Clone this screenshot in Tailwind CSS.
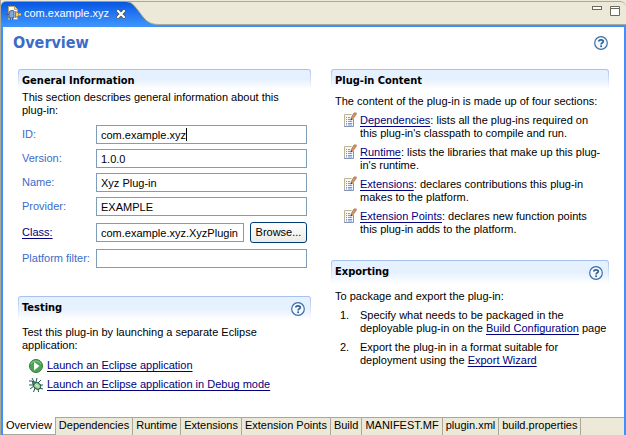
<!DOCTYPE html>
<html lang="en">
<head>
<meta charset="utf-8">
<title>com.example.xyz</title>
<script src="https://cdn.jsdelivr.net/npm/@tailwindcss/browser@4"></script>
</head>
<body class="bg-white text-black text-[11px] leading-[13px] font-['Tahoma','Liberation_Sans',sans-serif]">
<svg class="hidden" aria-hidden="true">
  <symbol id="help" viewBox="0 0 14 14">
    <circle cx="7" cy="7" r="6.3" fill="#f4f9ff" stroke="#3c6ea3" stroke-width="1.2"/>
    <path d="M4.8 5.6C4.8 3.2 9.3 3.2 9.3 5.5C9.3 6.9 7.1 6.7 7.1 8.6" fill="none" stroke="#2d6298" stroke-width="1.7"/>
    <rect x="6.2" y="9.4" width="1.8" height="1.7" fill="#2d6298"/>
  </symbol>
  <symbol id="page" viewBox="0 0 14 15">
    <path d="M1.5 14.5V2.5H8M10.5 6V14.5" fill="#f3f7ff"/>
    <rect x="1" y="2" width="10" height="13" fill="#f3f7ff"/>
    <path d="M1.5 14V2.5H8.5" fill="none" stroke="#c2b48c"/>
    <path d="M10.5 7V14.5H1" fill="none" stroke="#8294ba"/>
    <path d="M3 5.5H4M5 5.5H7M3 7.5H4M5 7.5H7M3 9.5H4M5 9.5H9M3 11.5H4M5 11.5H9M3 13H4M5 13H9" stroke="#7f9bcb"/>
    <path d="M7.8 8L8.4 5.3L11 .8L13.5 1L13 3L10 6.8Z" fill="#d3935a" stroke="#94613b" stroke-width=".5"/>
    <path d="M7.3 8.6L8.1 6.3L9.5 7.3Z" fill="#333"/>
  </symbol>
</svg>
<div class="flex flex-col min-h-screen border-l border-[#aca899]">
  <header class="flex h-[25px] bg-[#ece9d8]">
    <div class="flex items-center mt-px h-6 pl-[5px] rounded-tl-[5px] border-t border-[#8f9cae] bg-linear-to-b from-[#0855e2] to-[#3b92fc] text-white">
      <svg class="w-[15px] h-[15px] shrink-0" viewBox="0 0 15 15">
        <path d="M2.5 .5H8.5L11.5 3.5V13.5H2.5Z" fill="#fffdf0" stroke="#b9a56d"/>
        <path d="M8.5 .5V3.5H11.5" fill="#f2d99a" stroke="#b9a56d"/>
        <path d="M0 8.5H3M3 12V7C3 4.5 6 4 8 5V12Z" fill="#83a8dc" stroke="#345e9e"/>
        <path d="M4.5 12V14M6.5 12V14" stroke="#345e9e"/>
        <path d="M9.5 5.5L12.5 7V10L9.5 11.5Z" fill="#f6cf62" stroke="#a87921"/>
        <path d="M12.5 8.5H15" stroke="#f6cf62" stroke-width="2"/>
      </svg>
      <span class="ml-[3px]">com.example.xyz</span>
      <button aria-label="Close" class="ml-[7px] shrink-0"><svg class="w-[10px] h-[10px]" viewBox="0 0 10 10"><path d="M1 1L9 9M9 1L1 9" stroke="#4a4a42" stroke-width="3.6"/><path d="M1.3 1.3L8.7 8.7M8.7 1.3L1.3 8.7" stroke="#fff" stroke-width="2.2"/></svg></button>
    </div>
    <svg class="w-[32px] h-[25px] shrink-0" viewBox="0 0 32 25">
      <defs><linearGradient id="tab" gradientUnits="userSpaceOnUse" x1="0" y1="1" x2="0" y2="25"><stop stop-color="#0855e2"/><stop offset="1" stop-color="#3b92fc"/></linearGradient></defs>
      <path d="M0 1.5C5 2 7 4 11 9C17 16 20 24.5 32 24.5V25H0Z" fill="url(#tab)"/>
      <path d="M0 1.5C5 2 7 4 11 9C17 16 20 24.5 32 24.5" fill="none" stroke="#aca899"/>
      <path d="M0 1.5H32" stroke="#aca899"/>
    </svg>
    <div class="flex flex-1 justify-end gap-2 mt-px border-t border-b border-[#aca899] rounded-tr-[6px] pr-[6px] pt-1">
      <button aria-label="Minimize" class="flex items-start"><svg class="w-[10px] h-[10px]" viewBox="0 0 10 10"><rect x=".5" y=".5" width="9" height="3" fill="#fff" stroke="#6b6a5c"/></svg></button>
      <button aria-label="Maximize" class="flex items-start"><svg class="w-[10px] h-[10px]" viewBox="0 0 10 10"><path d="M.5 .5H9.5V9.5H.5ZM0 2.5H10" fill="#fff" stroke="#6b6a5c"/></svg></button>
    </div>
  </header>
  <div class="flex flex-col flex-1 border-2 border-b-0 border-[#3b92fc]">
    <main class="flex-1 px-[15px]">
      <div class="flex items-center justify-between h-8 -ml-[5px] pr-px">
        <h1 class="text-[16px] leading-5 font-bold font-['DejaVu_Sans_Condensed',sans-serif] text-[#3a6cc8]">Overview</h1>
        <button aria-label="Help"><svg class="w-[14px] h-[14px]"><use href="#help"/></svg></button>
      </div>
      <div class="grid grid-cols-[minmax(0,293fr)_minmax(0,278fr)] gap-5 pt-[10px]">
        <div class="flex flex-col gap-7">
          <section>
            <div class="h-5 rounded-t-[3px] bg-linear-to-b from-[#a6c0ee] to-white p-px pb-0"><h2 class="h-full rounded-t-[2px] px-[3px] pt-1 font-bold font-['DejaVu_Sans_Condensed',sans-serif] bg-linear-to-b from-[#e6f1ff] from-50% to-white">General Information</h2></div>
            <p class="px-1 pt-[2px]">This section describes general information about this<br>plug-in:</p>
            <form class="grid grid-cols-[70px_minmax(0,1fr)] items-center gap-x-1 gap-y-[5px] pl-1 pr-[4px] pt-2 text-[#3a6cc8]">
              <label for="id">ID:</label>
              <div class="relative flex"><input id="id" value="com.example.xyz" class="h-[19px] w-full min-w-0 border border-[#7f9db9] px-1 text-black"><span class="absolute left-[90px] top-[3px] h-[13px] w-px bg-black"></span></div>
              <label for="version">Version:</label>
              <input id="version" value="1.0.0" class="h-[19px] w-full min-w-0 border border-[#7f9db9] px-1 text-black">
              <label for="name">Name:</label>
              <input id="name" value="Xyz Plug-in" class="h-[19px] w-full min-w-0 border border-[#7f9db9] px-1 text-black">
              <label for="provider">Provider:</label>
              <input id="provider" value="EXAMPLE" class="h-[19px] w-full min-w-0 border border-[#7f9db9] px-1 text-black">
              <label for="class"><a href="#" class="text-[#000080] underline underline-offset-2">Class:</a></label>
              <div class="flex items-center gap-[6px] h-[23px]">
                <input id="class" value="com.example.xyz.XyzPlugin" class="h-[19px] flex-1 min-w-0 border border-[#7f9db9] px-1 text-black">
                <button type="button" class="h-[21px] w-[57px] rounded-[3px] border border-[#003c74] bg-linear-to-b from-white to-[#ecebe6] text-black">Browse...</button>
              </div>
              <label for="filter" class="whitespace-nowrap">Platform filter:</label>
              <input id="filter" class="h-[19px] w-full min-w-0 border border-[#7f9db9] px-1 text-black">
            </form>
          </section>
          <section>
            <div class="h-6 rounded-t-[3px] bg-linear-to-b from-[#a6c0ee] to-white p-px pb-0"><div class="flex h-full justify-between rounded-t-[2px] pl-[3px] pr-[5px] pt-1 bg-linear-to-b from-[#e6f1ff] from-50% to-white"><h2 class="font-bold font-['DejaVu_Sans_Condensed',sans-serif]">Testing</h2><button aria-label="Testing help" class="self-start pt-px"><svg class="w-[14px] h-[14px]"><use href="#help"/></svg></button></div></div>
            <p class="px-1 pt-[6px]">Test this plug-in by launching a separate Eclipse<br>application:</p>
            <ul class="pl-[11px] pt-1 text-[#000080]">
              <li class="flex items-center gap-1 h-[19px]"><svg class="w-[14px] h-[14px]" viewBox="0 0 14 14"><circle cx="7" cy="7" r="6.5" fill="#4da454" stroke="#2f7c3d"/><path d="M2 5C3 1 10 1 12 5" fill="none" stroke="#8bc98b"/><path d="M5 3L10.5 7L5 11.5Z" fill="#fff"/></svg><a href="#" class="underline underline-offset-2">Launch an Eclipse application</a></li>
              <li class="flex items-center gap-1 h-[19px]"><svg class="w-[14px] h-[14px]" viewBox="0 0 14 14"><path d="M3 0L5 4M8 0L7 4M0 3H3L5 5M0 7H4M1 11L5 8M4.5 14L6 10M9.5 14L9 10M14 11L10 10M14 7H10M12 2L9 5" fill="none" stroke="#24564e"/><ellipse cx="8" cy="7.8" rx="3.9" ry="3" transform="rotate(35 8 7.8)" fill="#a9d59a" stroke="#24564e"/><circle cx="4.9" cy="5" r="1.5" fill="#4c8a72" stroke="#24564e" stroke-width=".7"/><path d="M6.5 6.5L9.5 8.7" stroke="#e4f6d5"/></svg><a href="#" class="underline underline-offset-2">Launch an Eclipse application in Debug mode</a></li>
            </ul>
          </section>
        </div>
        <div class="flex flex-col gap-6">
          <section>
            <div class="h-5 rounded-t-[3px] bg-linear-to-b from-[#a6c0ee] to-white p-px pb-0"><h2 class="h-full rounded-t-[2px] px-[3px] pt-1 font-bold font-['DejaVu_Sans_Condensed',sans-serif] bg-linear-to-b from-[#e6f1ff] from-50% to-white">Plug-in Content</h2></div>
            <p class="pl-1 pt-[6px] whitespace-nowrap">The content of the plug-in is made up of four sections:</p>
            <ul class="flex flex-col gap-[6px] pl-3 pt-[6px] whitespace-nowrap">
              <li class="flex gap-[3px]"><svg class="w-[14px] h-[15px] -mt-[2px] shrink-0"><use href="#page"/></svg><p><a href="#" class="text-[#000080] underline underline-offset-2">Dependencies</a>: lists all the plug-ins required on<br>this plug-in's classpath to compile and run.</p></li>
              <li class="flex gap-[3px]"><svg class="w-[14px] h-[15px] -mt-[2px] shrink-0"><use href="#page"/></svg><p><a href="#" class="text-[#000080] underline underline-offset-2">Runtime</a>: lists the libraries that make up this plug-<br>in's runtime.</p></li>
              <li class="flex gap-[3px]"><svg class="w-[14px] h-[15px] -mt-[2px] shrink-0"><use href="#page"/></svg><p><a href="#" class="text-[#000080] underline underline-offset-2">Extensions</a>: declares contributions this plug-in<br>makes to the platform.</p></li>
              <li class="flex gap-[3px]"><svg class="w-[14px] h-[15px] -mt-[2px] shrink-0"><use href="#page"/></svg><p><a href="#" class="text-[#000080] underline underline-offset-2">Extension Points</a>: declares new function points<br>this plug-in adds to the platform.</p></li>
            </ul>
          </section>
          <section>
            <div class="h-6 rounded-t-[3px] bg-linear-to-b from-[#a6c0ee] to-white p-px pb-0"><div class="flex h-full justify-between rounded-t-[2px] pl-[3px] pr-[5px] pt-1 bg-linear-to-b from-[#e6f1ff] from-50% to-white"><h2 class="font-bold font-['DejaVu_Sans_Condensed',sans-serif]">Exporting</h2><button aria-label="Exporting help" class="self-start pt-px"><svg class="w-[14px] h-[14px]"><use href="#help"/></svg></button></div></div>
            <p class="pl-1 pt-[6px]">To package and export the plug-in:</p>
            <ol class="flex flex-col gap-[6px] pl-[9px] pt-[6px]">
              <li class="flex"><span class="w-5 shrink-0">1.</span><p class="whitespace-nowrap">Specify what needs to be packaged in the<br>deployable plug-in on the <a href="#" class="text-[#000080] underline underline-offset-2">Build Configuration</a> page</p></li>
              <li class="flex"><span class="w-5 shrink-0">2.</span><p class="whitespace-nowrap">Export the plug-in in a format suitable for<br>deployment using the <a href="#" class="text-[#000080] underline underline-offset-2">Export Wizard</a></p></li>
            </ol>
          </section>
        </div>
      </div>
    </main>
    <nav class="flex h-[18px] whitespace-nowrap bg-[#ece9d8]">
      <a href="#" class="px-[3px] pt-[2px] bg-white border-b border-r border-[#aca899]">Overview</a>
      <a href="#" class="px-[3px] pt-px border-t border-r border-[#aca899]">Dependencies</a>
      <a href="#" class="px-[3px] pt-px border-t border-r border-[#aca899]">Runtime</a>
      <a href="#" class="px-[3px] pt-px border-t border-r border-[#aca899]">Extensions</a>
      <a href="#" class="px-[3px] pt-px border-t border-r border-[#aca899]">Extension Points</a>
      <a href="#" class="px-[3px] pt-px border-t border-r border-[#aca899]">Build</a>
      <a href="#" class="px-[3px] pt-px border-t border-r border-[#aca899]">MANIFEST.MF</a>
      <a href="#" class="px-[3px] pt-px border-t border-r border-[#aca899]">plugin.xml</a>
      <a href="#" class="px-[3px] pt-px border-t border-r border-[#aca899]">build.properties</a>
      <span class="flex-1 border-t border-[#aca899]"></span>
    </nav>
  </div>
</div>
</body>
</html>
